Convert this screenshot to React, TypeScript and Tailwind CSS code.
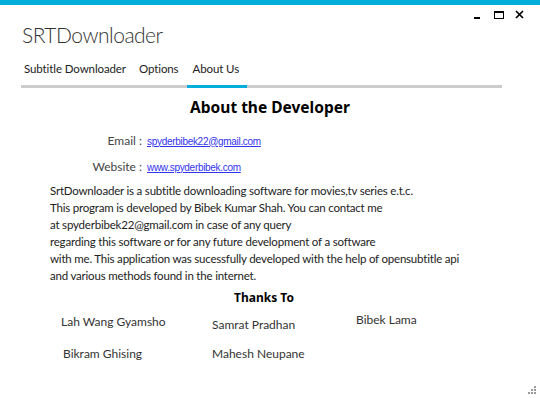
import React from "react";

const lato = { fontFamily: 'Lato, "Open Sans", sans-serif' };
const arial = { fontFamily: '"Liberation Sans", Arial, sans-serif' };

export default function App() {
  return (
    <div className="relative w-[540px] h-[398px] bg-white overflow-hidden text-[#333]" style={lato}>
      <div className="h-[5px] bg-[#00aedb]" />
      <div className="flex justify-end items-center pr-[16px] pt-[5px] h-[14px] text-[#111]">
        <span className="w-[6px] h-[2px] bg-black mt-[6px] mr-[14px]" />
        <span className="w-[10px] h-[8px] border-[1.5px] border-t-[2.5px] border-black mr-[11px]" />
        <svg width="9" height="9" viewBox="0 0 9 9">
          <path d="M1 1 L8 8 M8 1 L1 8" stroke="black" strokeWidth="1.7" />
        </svg>
      </div>
      <div className="pl-[22px] mt-[2px] text-[21px] tracking-[-0.5px] font-light leading-[28px] text-[#333]">
        SRTDownloader
      </div>
      <div className="mx-[21px] mt-[10px] w-[481px]">
        <div className="flex text-[11.5px] tracking-[-0.1px] leading-[20px] text-[#222] pl-[3px]">
          <span className="mr-[13px]">Subtitle Downloader</span>
          <span className="mr-[14px]">Options</span>
          <span>About Us</span>
        </div>
        <div className="h-[3px] bg-[#cccccc] mt-[6px] flex">
          <div className="ml-[166px] w-[60px] bg-[#00aedb]" />
        </div>
      </div>
      <div className="text-center font-bold text-[15.5px] text-black mt-[8px] leading-[22px]" style={{ fontFamily: '"Noto Sans", sans-serif' }}>
        About the Developer
      </div>
      <div className="mt-[15px] flex flex-col gap-[10px]">
        <div className="flex items-center h-[16px]">
          <span className="w-[147px] text-right text-[12px] text-[#444] pr-[5px]">Email :</span>
          <span className="text-[10px] tracking-[-0.3px] text-[#3333ee] underline" style={arial}>
            spyderbibek22@gmail.com
          </span>
        </div>
        <div className="flex items-center h-[16px]">
          <span className="w-[147px] text-right text-[12px] text-[#444] pr-[5px]">Website :</span>
          <span className="text-[10px] tracking-[-0.3px] text-[#3333ee] underline" style={arial}>
            www.spyderbibek.com
          </span>
        </div>
      </div>
      <div className="pl-[50px] mt-[7px] text-[11.5px] tracking-[-0.2px] leading-[17px] text-[#222]">
        <div>SrtDownloader is a subtitle downloading software for movies,tv series e.t.c.</div>
        <div>This program is developed by Bibek Kumar Shah. You can contact me</div>
        <div>at spyderbibek22@gmail.com in case of any query</div>
        <div>regarding this software or for any future development of a software</div>
        <div>with me. This application was sucessfully developed with the help of opensubtitle api</div>
        <div>and various methods found in the internet.</div>
      </div>
      <div className="text-center font-bold text-[12px] text-black mt-[5px] pr-[12px]" style={{ fontFamily: '"Noto Sans", sans-serif' }}>
        Thanks To
      </div>
      <div className="grid grid-cols-[151px_144px_auto] pl-[61px] text-[12px] text-[#333] mt-[6px]">
        <span className="mt-[0px]">Lah Wang Gyamsho</span>
        <span className="mt-[3px]">Samrat Pradhan</span>
        <span className="mt-[-2px]">Bibek Lama</span>
        <span className="mt-[11px] ml-[2px]">Bikram Ghising</span>
        <span className="mt-[11px]">Mahesh Neupane</span>
        <span />
      </div>
      <svg className="absolute right-[3px] bottom-[3px]" width="10" height="10" viewBox="0 0 10 10">
        <rect x="7" y="1" width="2" height="2" fill="#999" />
        <rect x="4" y="4" width="2" height="2" fill="#999" />
        <rect x="7" y="4" width="2" height="2" fill="#999" />
        <rect x="1" y="7" width="2" height="2" fill="#999" />
        <rect x="4" y="7" width="2" height="2" fill="#999" />
        <rect x="7" y="7" width="2" height="2" fill="#999" />
      </svg>
    </div>
  );
}
